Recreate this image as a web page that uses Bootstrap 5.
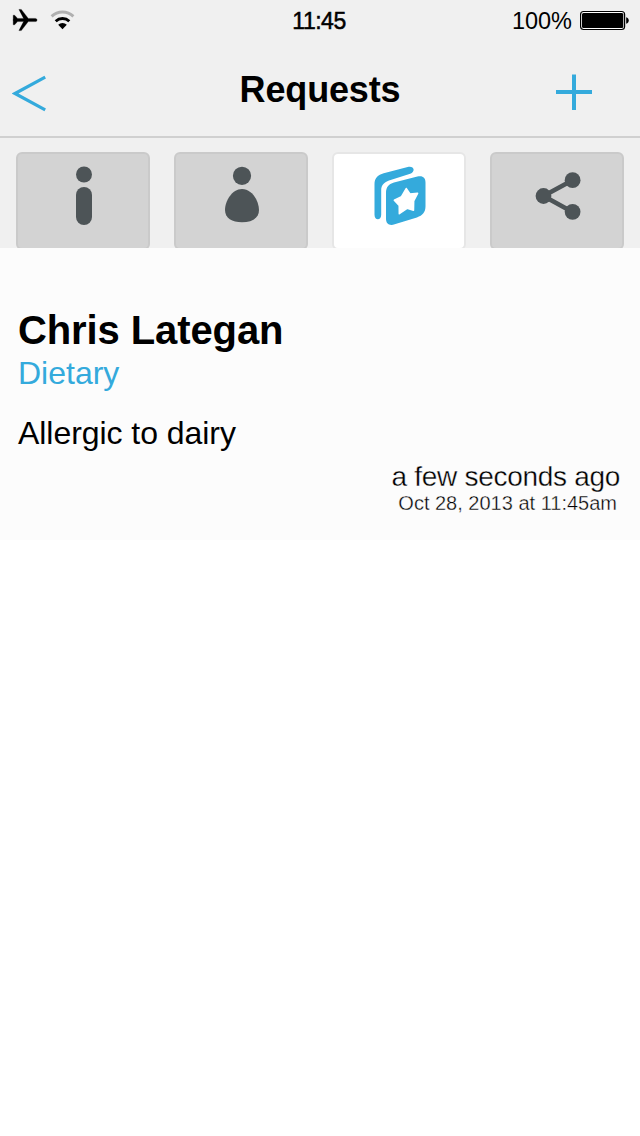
<!DOCTYPE html>
<html lang="en">
<head>
<meta charset="utf-8">
<meta name="viewport" content="width=device-width, initial-scale=1">
<title>Requests</title>
<link href="https://cdn.jsdelivr.net/npm/bootstrap@5.3.0/dist/css/bootstrap.min.css" rel="stylesheet">
<style>
  body { font-family: "Liberation Sans", Arial, sans-serif; background: #fff; color: #000; min-height: 1136px; }
  svg { display: block; flex: none; }
  .top-area { background: #f0f0f0; height: 248px; }
  .status-bar { height: 40px; padding: 2px 11px 0 12px; line-height: 38px; }
  .status-side { flex: 1 1 0; }
  .clock { font-size: 23px; letter-spacing: -.5px; -webkit-text-stroke: .5px #000; margin-right: 3px; }
  .charge { font-size: 23.5px; }
  .title-bar { height: 98px; padding: 4px 48px 0 12px; border-bottom: 2px solid #d0d0d0; }
  .title-bar h1 { font-size: 36px; line-height: 40px; font-weight: 700; letter-spacing: -.15px; }
  .nav-slot { flex: 1 1 0; }
  .nav-slot.start { margin-right: 36px; }
  .accent { color: #34aadc; }
  .tab-strip { height: 110px; padding: 14px 16px 0; gap: 24px; overflow: hidden; }
  .tab-item { flex: 1 1 0; height: 98px; background: #d3d3d3; border: 2px solid #cacaca; border-radius: 6px; color: #4d5457; padding: 0; justify-content: center; display: flex; }
  .tab-item.current { background: #fff; border-color: #e6e6e6; color: #34aadc; }
  .request { background: #fcfcfc; height: 292px; padding: 60px 20px 0 18px; }
  .request h2 { font-size: 40px; line-height: 44px; font-weight: 700; margin-bottom: 3px; letter-spacing: -.1px; }
  .kind { font-size: 32px; line-height: 36px; margin-bottom: 24px; }
  .note { font-size: 32px; line-height: 36px; margin-bottom: 11px; letter-spacing: -.05px; }
  .ago { font-size: 28px; line-height: 30px; letter-spacing: -.3px; }
  .stamp { font-size: 20px; line-height: 24px; padding-right: 3px; margin-top: -1px; }
  .thin { -webkit-text-stroke: .35px #fcfcfc; }
</style>
</head>
<body>
<header class="top-area">
  <div class="status-bar d-flex align-items-center">
    <div class="status-side d-flex align-items-center">
      <svg width="80" height="38" viewBox="12 2 80 38">
        <path d="M13.2 15.2h1.4l3 3.2h6L18.9 9.4h2.4l7 9h7c2.3 0 2.3 3.2 0 3.2h-7l-7 9h-2.4l4.7-9h-6l-3 3.2h-1.4V21l-.2-1 .2-1z" stroke="#000" stroke-width=".3"/>
        <g fill="none" stroke-width="2.9">
          <path d="M51.6 16.4a15.8 15.8 0 0 1 21.8 0" stroke="#b0b0b0"/>
          <path d="M55.7 21.2a10 10 0 0 1 13.6 0" stroke="#000"/>
        </g>
        <path d="M62.5 29.2l-4.3-4.5a6 6 0 0 1 8.6 0z"/>
      </svg>
    </div>
    <div class="clock">11:45</div>
    <div class="status-side d-flex align-items-center justify-content-end">
      <span class="charge">100%</span>
      <svg class="ms-2" width="49" height="38" viewBox="580 2 49 38">
        <rect x="580.6" y="11.5" width="44" height="18" rx="3" fill="#fff" stroke="#000" stroke-width="1.2"/>
        <rect x="582" y="13" width="41.3" height="15" rx="1.5"/>
        <path d="M626.2 17.2c3.4.8 3.4 5.8 0 6.6z"/>
      </svg>
    </div>
  </div>
  <nav class="title-bar d-flex align-items-center accent">
    <div class="nav-slot start">
      <a class="accent" href="#" aria-label="Back"><svg width="36" height="46" viewBox="12 67 36 46" fill="none" stroke="currentColor" stroke-width="3.2"><path d="M45.2 77.2L15 93.5l30.2 16.3"/></svg></a>
    </div>
    <h1 class="m-0 text-black">Requests</h1>
    <div class="nav-slot d-flex justify-content-end">
      <a class="accent" href="#" aria-label="Add"><svg width="36" height="46" viewBox="556 67 36 46" fill="none" stroke="currentColor" stroke-width="4"><path d="M556 92h36M574 74.5v35.5"/></svg></a>
    </div>
  </nav>
  <div class="tab-strip d-flex">
    <a class="tab-item" href="#" aria-label="Information">
      <svg width="80" height="90" viewBox="43 154 80 90" fill="currentColor"><circle cx="84" cy="174.5" r="8"/><rect x="76" y="187" width="16" height="38" rx="8"/></svg>
    </a>
    <a class="tab-item" href="#" aria-label="Person">
      <svg width="80" height="90" viewBox="201 154 80 90" fill="currentColor"><circle cx="242" cy="175.8" r="9.1"/><path d="M242 189c10 0 17 12 17 21 0 8-7 12.3-17 12.3S225 218 225 210c0-9 7-21 17-21z"/></svg>
    </a>
    <a class="tab-item current" href="#" aria-label="Requests">
      <svg width="80" height="90" viewBox="359 154 80 90" fill="currentColor">
        <path d="M374.5 184c0-6 3.5-9.2 9.2-10.8l24-6.3c6.3-1.5 8.3 4.2 2.5 6.9l-18.8 6c-7 2-10.2 5.1-10.2 10.2v24.7c0 6-6.700 6-6.700 0z"/>
        <path d="M394 182.6l23.4-6c5.3-1.3 8.1 1.1 8.1 5.9v23.8c0 5.8-2.8 9.2-8.6 11.1l-22.2 6.9c-5.4 1.8-8.7-.7-8.7-5.6v-25.4c0-6 2.500-9.200 8-10.700z"/>
        <path d="M406.2 188.500l3.800 5.500 7.600-.7-3.900 7.500-.2 9.500-6.400-2-7.800 5.400-.1-8.300-4.900-5.200 7.200-3.500z" fill="#fff" stroke="#fff" stroke-width="1.5" stroke-linejoin="round"/>
      </svg>
    </a>
    <a class="tab-item" href="#" aria-label="Share">
      <svg width="80" height="90" viewBox="517 154 80 90" fill="currentColor"><path d="M572.5 180.3L543.5 196l29 16" fill="none" stroke="currentColor" stroke-width="4.6"/><circle cx="543.5" cy="196" r="7.9"/><circle cx="572.6" cy="180.2" r="7.9"/><circle cx="572.6" cy="211.8" r="7.9"/></svg>
    </a>
  </div>
</header>
<main>
  <article class="request">
    <h2>Chris Lategan</h2>
    <div class="kind accent">Dietary</div>
    <p class="note">Allergic to dairy</p>
    <div class="ago thin text-end">a few seconds ago</div>
    <div class="stamp thin text-end">Oct 28, 2013 at 11:45am</div>
  </article>
</main>
<script src="https://cdn.jsdelivr.net/npm/bootstrap@5.3.0/dist/js/bootstrap.bundle.min.js"></script>
</body>
</html>
